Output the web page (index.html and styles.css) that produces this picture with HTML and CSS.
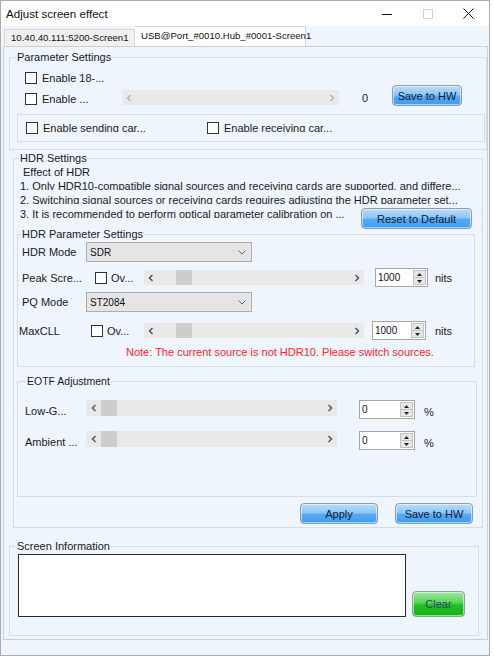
FILE: index.html
```html
<!DOCTYPE html>
<html lang="en">
<head>
    <meta charset="UTF-8">
    <title>Adjust screen effect</title>
    <link rel="stylesheet" href="styles.css">
</head>
<body>
<div class="window">
    <div class="titlebar">
        <span class="title">Adjust screen effect</span>
        <div class="caption">
            <span class="cap-btn"><svg width="10" height="10" viewBox="0 0 10 10"><path d="M0 5.5 H10" stroke="#111" stroke-width="1"/></svg></span>
            <span class="cap-btn"><svg width="10" height="10" viewBox="0 0 10 10"><rect x="0.5" y="0.5" width="9" height="9" fill="none" stroke="#cfcfcf" stroke-width="1"/></svg></span>
            <span class="cap-btn"><svg width="11" height="11" viewBox="0 0 11 11"><path d="M0.5 0.5 L10.5 10.5 M10.5 0.5 L0.5 10.5" stroke="#111" stroke-width="1"/></svg></span>
        </div>
    </div>

    <div class="tabs">
        <div class="tab">10.40.40.111:5200-Screen1</div>
        <div class="tab tab-active">USB@Port_#0010.Hub_#0001-Screen1</div>
    </div>

    <div class="tab-page">
        <fieldset class="group group-param">
            <legend>Parameter Settings</legend>
            <div class="row p-row1">
                <label class="check"><span class="box"></span>Enable 18-...</label>
            </div>
            <div class="row p-row2">
                <label class="check check-enable"><span class="box"></span>Enable ...</label>
                <div class="hs hs-param">
                    <span class="sa"><svg width="6" height="8" viewBox="0 0 6 8"><path d="M4.5 1 L1.5 4 L4.5 7" fill="none" stroke="#b5b5b5" stroke-width="1.5"/></svg></span>
                    <span class="sa sa-right"><svg width="6" height="8" viewBox="0 0 6 8"><path d="M1.5 1 L4.5 4 L1.5 7" fill="none" stroke="#b5b5b5" stroke-width="1.5"/></svg></span>
                </div>
                <span class="zero">0</span>
                <button class="btn btn-blue btn-save-top">Save to HW</button>
            </div>
            <div class="subbox">
                <label class="check check-send"><span class="box"></span><span class="cut">Enable sending car...</span></label>
                <label class="check"><span class="box"></span><span class="cut">Enable receiving car...</span></label>
            </div>
        </fieldset>

        <fieldset class="group group-hdr">
            <legend>HDR Settings</legend>
            <div class="effect-title">Effect of HDR</div>
            <div class="effect-line"><span class="cut">1. Only HDR10-compatible signal sources and receiving cards are supported, and differe...</span></div>
            <div class="effect-line"><span class="cut">2. Switching signal sources or receiving cards requires adjusting the HDR parameter set...</span></div>
            <div class="row effect-last">
                <span class="cut">3. It is recommended to perform optical parameter calibration on ...</span>
                <button class="btn btn-blue btn-reset">Reset to Default</button>
            </div>

            <fieldset class="group group-hdrp">
                <legend>HDR Parameter Settings</legend>
                <div class="row r-mode">
                    <span class="lbl lbl-mode">HDR Mode</span>
                    <div class="select">
                        <span class="select-val">SDR</span>
                        <svg width="8" height="5" viewBox="0 0 8 5"><path d="M0.5 0.5 L4 4 L7.5 0.5" fill="none" stroke="#666" stroke-width="1"/></svg>
                    </div>
                </div>
                <div class="row r-peak">
                    <span class="lbl lbl-peak">Peak Scre...</span>
                    <label class="check check-ov"><span class="box"></span>Ov...</label>
                    <div class="hs hs-nits">
                        <span class="sa"><svg width="6" height="8" viewBox="0 0 6 8"><path d="M4.5 1 L1.5 4 L4.5 7" fill="none" stroke="#555" stroke-width="1.5"/></svg></span>
                        <span class="thumb thumb-nits"></span>
                        <span class="sa sa-right"><svg width="6" height="8" viewBox="0 0 6 8"><path d="M1.5 1 L4.5 4 L1.5 7" fill="none" stroke="#555" stroke-width="1.5"/></svg></span>
                    </div>
                    <div class="spin spin-peak">
                        <span class="spin-val">1000</span>
                        <span class="spin-btns">
                            <span><svg width="5" height="3" viewBox="0 0 5 3"><path d="M0 3 L2.5 0 L5 3 Z" fill="#222"/></svg></span>
                            <span><svg width="5" height="3" viewBox="0 0 5 3"><path d="M0 0 L2.5 3 L5 0 Z" fill="#222"/></svg></span>
                        </span>
                    </div>
                    <span class="unit unit-peak">nits</span>
                </div>
                <div class="row r-pq">
                    <span class="lbl lbl-mode">PQ Mode</span>
                    <div class="select">
                        <span class="select-val">ST2084</span>
                        <svg width="8" height="5" viewBox="0 0 8 5"><path d="M0.5 0.5 L4 4 L7.5 0.5" fill="none" stroke="#666" stroke-width="1"/></svg>
                    </div>
                </div>
                <div class="row r-maxcll">
                    <span class="lbl lbl-maxcll">MaxCLL</span>
                    <label class="check check-ov2"><span class="box"></span>Ov...</label>
                    <div class="hs hs-nits">
                        <span class="sa"><svg width="6" height="8" viewBox="0 0 6 8"><path d="M4.5 1 L1.5 4 L4.5 7" fill="none" stroke="#555" stroke-width="1.5"/></svg></span>
                        <span class="thumb thumb-nits"></span>
                        <span class="sa sa-right"><svg width="6" height="8" viewBox="0 0 6 8"><path d="M1.5 1 L4.5 4 L1.5 7" fill="none" stroke="#555" stroke-width="1.5"/></svg></span>
                    </div>
                    <div class="spin spin-maxcll">
                        <span class="spin-val">1000</span>
                        <span class="spin-btns">
                            <span><svg width="5" height="3" viewBox="0 0 5 3"><path d="M0 3 L2.5 0 L5 3 Z" fill="#222"/></svg></span>
                            <span><svg width="5" height="3" viewBox="0 0 5 3"><path d="M0 0 L2.5 3 L5 0 Z" fill="#222"/></svg></span>
                        </span>
                    </div>
                    <span class="unit unit-maxcll">nits</span>
                </div>
                <div class="note">Note: The current source is not HDR10. Please switch sources.</div>
            </fieldset>

            <fieldset class="group group-eotf">
                <legend>EOTF Adjustment</legend>
                <div class="row r-eotf">
                    <span class="lbl lbl-eotf">Low-G...</span>
                    <div class="hs hs-eotf">
                        <span class="sa sa-wide"><svg width="6" height="8" viewBox="0 0 6 8"><path d="M4.5 1 L1.5 4 L4.5 7" fill="none" stroke="#555" stroke-width="1.5"/></svg></span>
                        <span class="thumb"></span>
                        <span class="sa sa-right"><svg width="6" height="8" viewBox="0 0 6 8"><path d="M1.5 1 L4.5 4 L1.5 7" fill="none" stroke="#555" stroke-width="1.5"/></svg></span>
                    </div>
                    <div class="spin spin-eotf">
                        <span class="spin-val">0</span>
                        <span class="spin-btns">
                            <span><svg width="5" height="3" viewBox="0 0 5 3"><path d="M0 3 L2.5 0 L5 3 Z" fill="#222"/></svg></span>
                            <span><svg width="5" height="3" viewBox="0 0 5 3"><path d="M0 0 L2.5 3 L5 0 Z" fill="#222"/></svg></span>
                        </span>
                    </div>
                    <span class="unit unit-pct">%</span>
                </div>
                <div class="row r-eotf">
                    <span class="lbl lbl-eotf">Ambient ...</span>
                    <div class="hs hs-eotf">
                        <span class="sa sa-wide"><svg width="6" height="8" viewBox="0 0 6 8"><path d="M4.5 1 L1.5 4 L4.5 7" fill="none" stroke="#555" stroke-width="1.5"/></svg></span>
                        <span class="thumb"></span>
                        <span class="sa sa-right"><svg width="6" height="8" viewBox="0 0 6 8"><path d="M1.5 1 L4.5 4 L1.5 7" fill="none" stroke="#555" stroke-width="1.5"/></svg></span>
                    </div>
                    <div class="spin spin-eotf">
                        <span class="spin-val">0</span>
                        <span class="spin-btns">
                            <span><svg width="5" height="3" viewBox="0 0 5 3"><path d="M0 3 L2.5 0 L5 3 Z" fill="#222"/></svg></span>
                            <span><svg width="5" height="3" viewBox="0 0 5 3"><path d="M0 0 L2.5 3 L5 0 Z" fill="#222"/></svg></span>
                        </span>
                    </div>
                    <span class="unit unit-pct">%</span>
                </div>
            </fieldset>

            <div class="row hdr-actions">
                <button class="btn btn-blue btn-wide">Apply</button>
                <button class="btn btn-blue btn-wide">Save to HW</button>
            </div>
        </fieldset>

        <fieldset class="group group-info">
            <legend>Screen Information</legend>
            <div class="row info-row">
                <div class="info-box"></div>
                <button class="btn btn-green">Clear</button>
            </div>
        </fieldset>
    </div>
</div>
</body>
</html>
```

FILE: styles.css
```css
* {
    box-sizing: border-box;
}

body {
    margin: 0;
    background: #fff;
    font-family: "Liberation Sans", Arial, sans-serif;
    font-size: 11px;
    color: #1a1a1a;
}

.window {
    width: 490px;
    height: 656px;
    border: 1px solid #acacac;
    background: #eef5fc;
}

/* title bar */
.titlebar {
    height: 25px;
    background: #fff;
    display: flex;
    align-items: center;
}

.title {
    padding-left: 5px;
    font-size: 11.6px;
    color: #111;
}

.caption {
    margin-left: auto;
    display: flex;
    height: 100%;
}

.cap-btn {
    width: 41px;
    display: flex;
    align-items: center;
    justify-content: center;
}

/* tabs */
.tabs {
    height: 20px;
    display: flex;
    align-items: flex-end;
    padding-left: 3px;
}

.tab {
    width: 131px;
    height: 17px;
    border: 1px solid #d6d6d6;
    border-bottom: 0;
    background: #f0f0f0;
    font-size: 9.6px;
    line-height: 16px;
    padding-left: 6px;
    white-space: nowrap;
    color: #111;
}

.tab-active {
    width: 171px;
    height: 20px;
    background: #fff;
    border-left: 0;
    padding-top: 1px;
}

.tab-page {
    margin-left: 2px;
    width: 485px;
    height: 594px;
    border: 1px solid #c9d1d8;
}

/* group boxes */
.group {
    margin: 0;
    padding: 0;
    min-width: 0;
    border: 1px solid #d4dde5;
}

.group > legend {
    padding: 0 1px;
    line-height: 14px;
    font-size: 11px;
    color: #1a1a1a;
}

.row {
    display: flex;
}

.check {
    display: flex;
    align-items: center;
    gap: 5px;
    white-space: nowrap;
    line-height: 14px;
}

.box {
    flex: none;
    width: 12px;
    height: 12px;
    border: 1px solid #333;
    background: #fff;
}

.cut {
    display: inline-block;
    line-height: 14px;
    clip-path: inset(0 0 3px 0);
    white-space: nowrap;
}

/* parameter settings */
.group-param {
    margin: 3px 0 0 5px;
    width: 478px;
    padding-bottom: 7px;
}

.group-param > legend {
    margin-left: 6px;
}

.p-row1 {
    margin-top: 7px;
    height: 14px;
    padding-left: 15px;
    align-items: center;
}

.p-row2 {
    height: 21px;
    padding-left: 15px;
    align-items: flex-start;
}

.check-enable {
    width: 97px;
    margin-top: 7px;
}

.hs {
    display: flex;
    align-items: stretch;
    background: #e9e9e9;
}

.hs-param {
    width: 217px;
    height: 15px;
    margin-top: 5px;
}

.sa {
    width: 14px;
    display: flex;
    align-items: center;
    justify-content: center;
}

.sa-wide {
    width: 15px;
}

.sa-right {
    margin-left: auto;
}

.thumb {
    width: 16px;
    background: #cdcdcd;
}

.zero {
    width: 30px;
    margin-left: 23px;
    margin-top: 6px;
    line-height: 14px;
}

.subbox {
    margin: 8px 0 0 7px;
    width: 468px;
    height: 28px;
    border: 1px solid #d4dde5;
    display: flex;
    align-items: center;
    padding-left: 8px;
}

.check-send {
    width: 181px;
}

/* buttons */
.btn {
    padding: 0;
    font-family: inherit;
    font-size: 11px;
    color: #0c1c3a;
    border: 1px solid #8f9ba6;
    border-radius: 4px;
    box-shadow: inset 0 0 0 1px rgba(255, 255, 255, 0.55);
}

.btn-blue {
    background: linear-gradient(to bottom, #b9ddfd 0%, #8cc7fb 45%, #56abf5 55%, #3f99ef 100%);
}

.btn-green {
    width: 53px;
    height: 26px;
    margin-left: 6px;
    color: #1d4c6a;
    background: linear-gradient(to bottom, #9fe89f 0%, #55d555 45%, #22bf22 55%, #17b117 100%);
}

.btn-save-top {
    width: 70px;
    height: 21px;
}

.btn-reset {
    width: 111px;
    height: 21px;
    margin: 1px 10px 0 auto;
    flex: none;
}

.btn-wide {
    width: 78px;
    height: 21px;
}

/* HDR settings */
.group-hdr {
    margin: 1px 0 0 9px;
    width: 470px;
    padding-bottom: 3px;
}

.group-hdr > legend {
    margin-left: 5px;
}

.effect-title {
    padding-left: 9px;
    line-height: 14px;
}

.effect-line {
    padding-left: 6px;
    height: 14px;
}

.effect-last {
    height: 20px;
    padding-left: 6px;
    align-items: flex-start;
}

.group-hdrp {
    margin-left: 3px;
    width: 458px;
    padding-bottom: 7px;
}

.group-hdrp > legend {
    margin-left: 3px;
}

.lbl {
    flex: none;
    line-height: 14px;
    white-space: nowrap;
}

.r-mode {
    margin-top: 1px;
    height: 20px;
    padding-left: 4px;
    align-items: center;
}

.r-pq {
    margin-top: 5px;
    height: 20px;
    padding-left: 4px;
    align-items: center;
}

.lbl-mode {
    width: 64px;
}

.select {
    width: 166px;
    height: 20px;
    display: flex;
    align-items: center;
    padding: 0 5px 0 3px;
    border: 1px solid #adadad;
    background: #e5e5e5;
    font-size: 10px;
    color: #111;
}

.select-val {
    flex: 1;
}

.r-peak {
    margin-top: 6px;
    height: 19px;
    padding-left: 4px;
    align-items: center;
}

.lbl-peak {
    width: 73px;
}

.check-ov {
    width: 49px;
    gap: 4px;
}

.hs-nits {
    width: 220px;
    height: 15px;
}

.thumb-nits {
    margin-left: 18px;
}

.spin {
    display: flex;
    height: 19px;
    border: 1px solid #a6a6a6;
    background: #fff;
}

.spin-val {
    flex: 1;
    padding-left: 2px;
    line-height: 17px;
    font-size: 10px;
    color: #111;
}

.spin-btns {
    width: 14px;
    display: flex;
    flex-direction: column;
    padding: 1px 1px 1px 0;
}

.spin-btns span {
    flex: 1;
    display: flex;
    align-items: center;
    justify-content: center;
    background: #e6e6e6;
    border: 1px solid #c4c4c4;
}

.spin-btns span + span {
    border-top: 0;
}

.spin-peak {
    width: 53px;
    margin-left: 11px;
}

.unit {
    line-height: 14px;
}

.unit-peak {
    margin-left: 7px;
}

.r-maxcll {
    margin-top: 9px;
    height: 19px;
    padding-left: 1px;
    align-items: center;
}

.lbl-maxcll {
    width: 72px;
}

.check-ov2 {
    width: 53px;
    gap: 4px;
}

.spin-maxcll {
    width: 54px;
    margin-left: 8px;
}

.unit-maxcll {
    margin-left: 9px;
}

.note {
    margin-top: 5px;
    padding-left: 108px;
    line-height: 14px;
    color: #ee2a2f;
}

/* EOTF */
.group-eotf {
    margin: 7px 0 0 3px;
    width: 460px;
    padding-bottom: 46px;
}

.group-eotf > legend {
    margin-left: 8px;
    font-size: 10.5px;
}

.r-eotf {
    margin-top: 12px;
    height: 19px;
    padding-left: 7px;
    align-items: flex-start;
}

.lbl-eotf {
    width: 61px;
    margin-top: 4px;
}

.hs-eotf {
    width: 251px;
    height: 16px;
}

.spin-eotf {
    width: 56px;
    margin-left: 22px;
}

.unit-pct {
    margin-left: 9px;
    margin-top: 5px;
}

.hdr-actions {
    margin-top: 6px;
    justify-content: flex-end;
    gap: 17px;
    padding-right: 9px;
}

/* screen information */
.group-info {
    margin: 11px 0 0 5px;
    width: 470px;
    padding-bottom: 18px;
}

.group-info > legend {
    margin-left: 6px;
}

.info-row {
    margin-top: 1px;
    padding-left: 8px;
    align-items: flex-end;
}

.info-box {
    width: 388px;
    height: 63px;
    border: 1px solid #2b2b2b;
    background: #fff;
}
```
